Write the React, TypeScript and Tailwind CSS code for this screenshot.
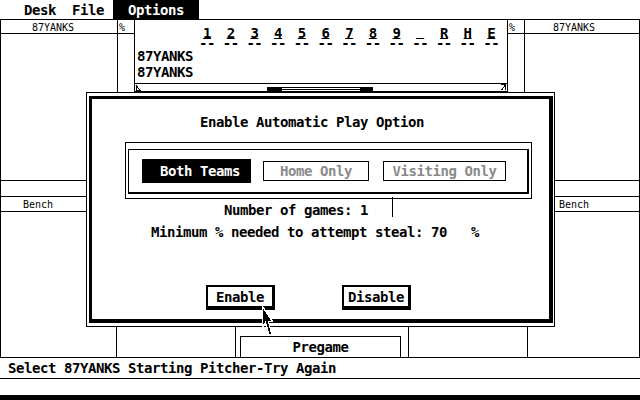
const SYS = "font-['DejaVu_Sans_Mono',monospace] font-bold text-[14px] tracking-[-0.43px] whitespace-pre";
const SMALL = "font-['DejaVu_Sans_Mono',monospace] font-normal text-[10px] leading-[10px] whitespace-pre";

const innings = ['1', '2', '3', '4', '5', '6', '7', '8', '9', '\u00a0', 'R', 'H', 'E'];

const MenuBar = () => (
    <div className="flex h-[20px] border-b border-black">
        <span className={`${SYS} leading-[16px] ml-[24px] mt-[2px]`}>Desk</span>
        <span className={`${SYS} leading-[16px] ml-[16px] mt-[2px]`}>File</span>
        <div className="ml-[9px] w-[86px] bg-black pl-[15px]">
            <span className={`${SYS} leading-[16px] block mt-[2px] text-white`}>Options</span>
        </div>
    </div>
);

// horizontal scroller along the bottom of the linescore window
const Scroller = () => (
    <svg width="372" height="7" viewBox="0 0 372 7" className="block" shapeRendering="crispEdges">
        <path d="M1.5 1v6M1.5 6.5h4M1.5 2l4 4.5" stroke="black" strokeWidth="1" fill="none" />
        <path d="M132 3.5h106M132 5.5h106" stroke="black" strokeWidth="1" />
        <rect x="132" y="4" width="15" height="3" fill="black" />
        <rect x="225" y="4" width="13" height="3" fill="black" />
        <path d="M370.5 0v6M366 0.5h5M370.5 1l-4 5" stroke="black" strokeWidth="1" fill="none" />
    </svg>
);

const Header = ({ label, pad }: { label: string; pad: string }) => (
    <div className="h-[14px] border-b border-black">
        <span className={`${SMALL} block pt-[3px] ${pad}`}>{label}</span>
    </div>
);

const BenchTable = ({ pad }: { pad: string }) => (
    <>
        <div className="h-[16px] border-b border-black" />
        <div className="h-[15px] border-b border-black">
            <span className={`${SMALL} block pt-[3px] ${pad}`}>Bench</span>
        </div>
    </>
);

const Cursor = () => (
    <svg
        width="13"
        height="32"
        viewBox="0 0 13 32"
        className="absolute left-[261px] top-[305px]"
        shapeRendering="crispEdges"
    >
        <path
            d="M1.5 1.5 L1.5 22 L4.5 17.5 L8 30 L10.5 29 L7.5 16.5 L11.5 16.5 Z"
            fill="black"
            stroke="white"
            strokeWidth="1.2"
        />
    </svg>
);

const AutoPlayDialog = () => (
    <div className="absolute left-[86px] top-[92px] w-[469px] h-[235px] border border-black bg-white pt-[3px] pl-[2px] pr-[1px] pb-[3px]">
        <div className="relative h-full border-[3px] border-r-[4px] border-b-[4px] border-black flex flex-col">
            <div className={`${SYS} leading-[16px] mt-[15px] ml-[108px]`}>Enable Automatic Play Option</div>

            <div className="mt-[12px] ml-[33px] w-[407px] h-[57px] border border-black pt-[6px] pl-[2px] pr-[2px] pb-[4px]">
                <div className="h-full border border-r-2 border-b-2 border-black flex items-center">
                    <div className="ml-[13px] w-[109px] h-[24px] bg-black pl-[18px] flex items-center">
                        <span className={`${SYS} leading-[16px] text-white`}>Both Teams</span>
                    </div>
                    <div className="ml-[12px] w-[106px] h-[20px] border border-black flex items-center justify-center">
                        <span className={`${SYS} leading-[16px] text-[#8a8a8a]`}>Home Only</span>
                    </div>
                    <div className="ml-[14px] w-[123px] h-[20px] border border-black flex items-center justify-center">
                        <span className={`${SYS} leading-[16px] text-[#8a8a8a]`}>Visiting Only</span>
                    </div>
                </div>
            </div>

            <div className={`${SYS} leading-[16px] mt-[3px] ml-[132px]`}>Number of games: 1</div>
            <div className={`${SYS} leading-[16px] mt-[6px] ml-[59px]`}>Minimum % needed to attempt steal: 70   %</div>

            <div className="flex mt-[45px]">
                <div className="ml-[114px] w-[69px] h-[25px] border-2 border-r-[3px] border-b-[4px] border-black flex items-center justify-center">
                    <span className={`${SYS} leading-[16px]`}>Enable</span>
                </div>
                <div className="ml-[67px] w-[69px] h-[25px] border-2 border-r-[3px] border-b-[4px] border-black flex items-center justify-center">
                    <span className={`${SYS} leading-[16px]`}>Disable</span>
                </div>
            </div>

            <div className="absolute left-[300px] top-[98px] w-[1px] h-[20px] bg-black" />
        </div>
    </div>
);

export default function App() {
    return (
        <div className="relative w-[640px] h-[400px] overflow-hidden bg-white text-black">
            <MenuBar />

            <div className="flex flex-col h-[337px]">
                {/* rosters and linescore */}
                <div className="flex h-[160px]">
                    <div className="w-[118px] border-x border-black">
                        <Header label="87YANKS" pad="pl-[31px]" />
                    </div>
                    <div className="w-[17px] border-r border-black">
                        <Header label="%" pad="pl-[1px]" />
                    </div>
                    <div className="w-[373px] border-r border-black">
                        <div className="h-[72px] border-b border-black flex flex-col">
                            <div className="flex pl-[64px] pt-[6px]">
                                {innings.map((c, i) => (
                                    <div key={i} className="w-[24px]">
                                        <div className={`${SYS} leading-[14px] h-[14px] w-[16px] text-center`}>
                                            <span className="underline decoration-1 underline-offset-[0px]">{c}</span>
                                        </div>
                                        <div className={`${SYS} leading-[6px] h-[8px] w-[16px]`}>--</div>
                                    </div>
                                ))}
                            </div>
                            <div className={`${SYS} leading-[16px] pl-[2px]`}>87YANKS</div>
                            <div className={`${SYS} leading-[16px] pl-[2px]`}>87YANKS</div>
                            <div className="mt-auto h-[8px] border-t border-black">
                                <Scroller />
                            </div>
                        </div>
                    </div>
                    <div className="w-[17px] border-r border-black">
                        <Header label="%" pad="pl-[1px]" />
                    </div>
                    <div className="w-[115px] border-r border-black">
                        <Header label="87YANKS" pad="pl-[28px]" />
                    </div>
                </div>

                {/* bench tables and pregame */}
                <div className="flex flex-1">
                    <div className="w-[117px] border-x border-t border-black">
                        <BenchTable pad="pl-[22px]" />
                    </div>
                    <div className="w-[119px] border-r border-t border-black" />
                    <div className="w-[173px] border-r border-t border-black flex flex-col">
                        <div
                            className={`${SYS} leading-[16px] mt-auto ml-[4px] mr-[7px] h-[21px] border-t border-x border-black pt-[2px] text-center`}
                        >
                            Pregame
                        </div>
                    </div>
                    <div className="w-[119px] border-r border-t border-black" />
                    <div className="w-[112px] border-r border-t border-black">
                        <BenchTable pad="pl-[31px]" />
                    </div>
                </div>
            </div>

            {/* message line */}
            <div className={`${SYS} leading-[16px] h-[22px] border-y border-black pl-[8px] pt-[2px]`}>
                Select 87YANKS Starting Pitcher-Try Again
            </div>
            <div className="h-[16px]" />
            <div className="h-[5px] bg-black" />

            <AutoPlayDialog />
            <Cursor />
        </div>
    );
}
